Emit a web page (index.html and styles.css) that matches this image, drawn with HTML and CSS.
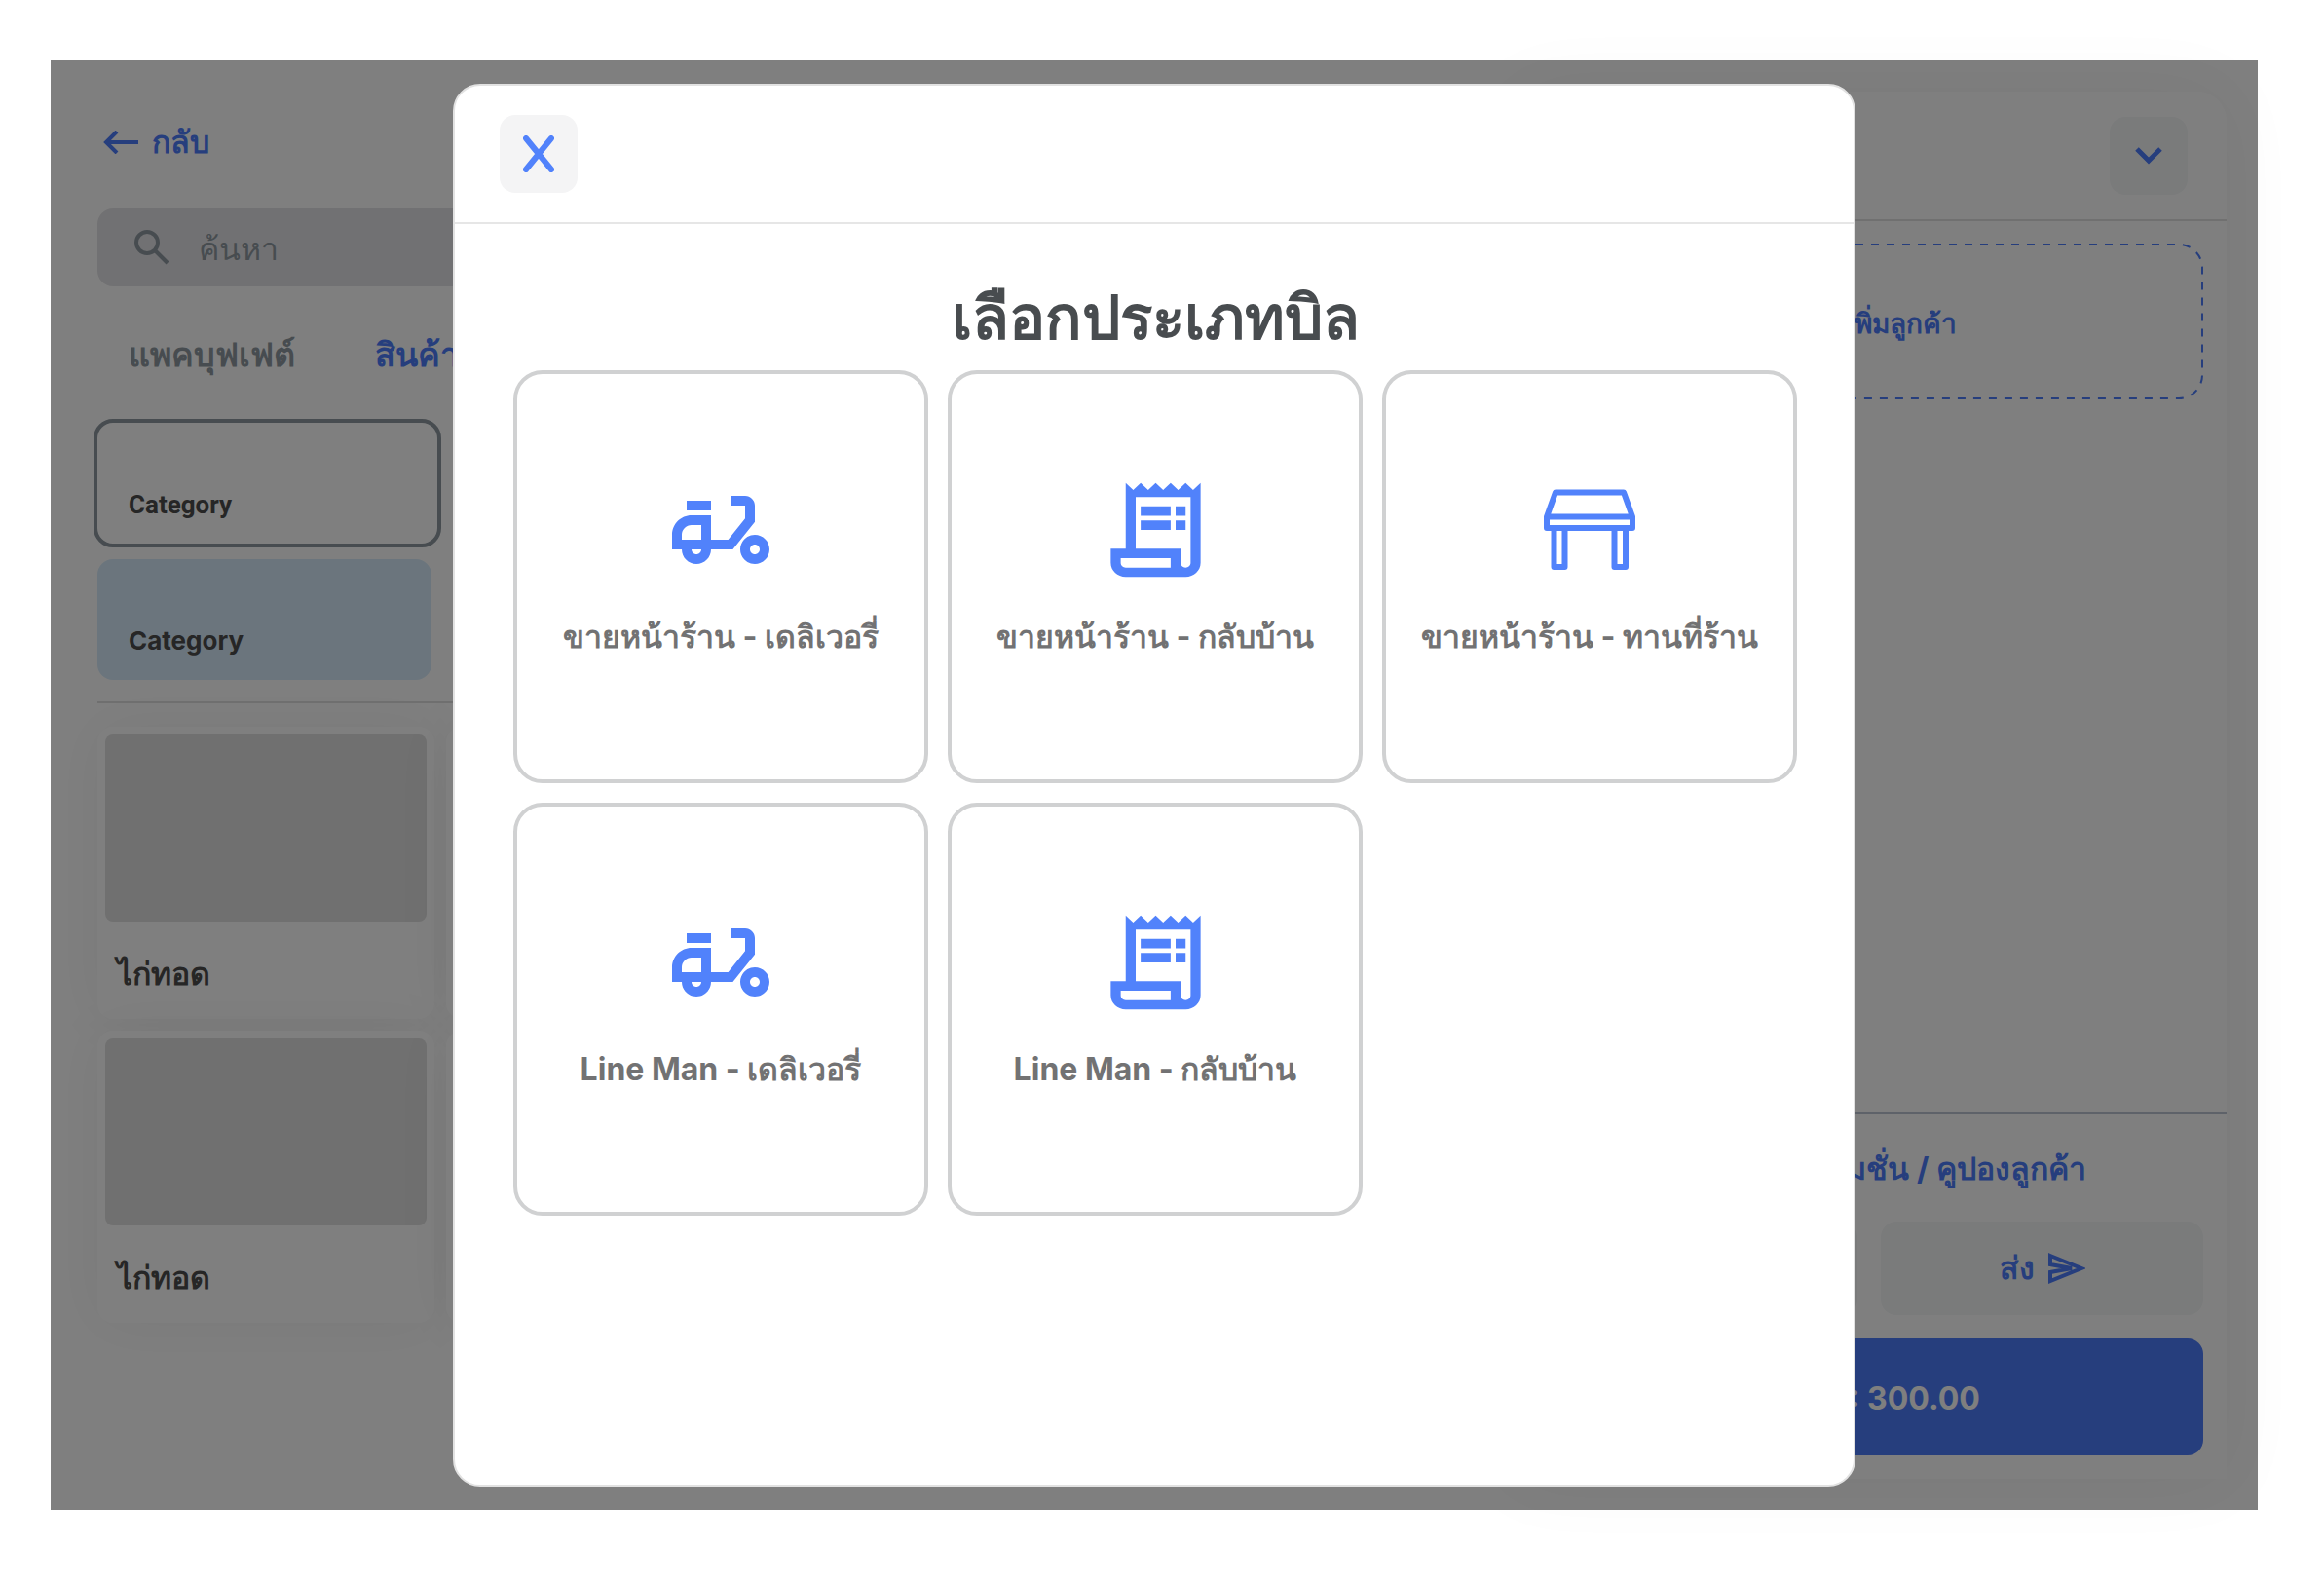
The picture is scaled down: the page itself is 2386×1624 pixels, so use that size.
FILE: index.html
```html
<!DOCTYPE html>
<html lang="th">
<head>
    <meta charset="UTF-8">
    <meta name="viewport" content="width=device-width, initial-scale=1.0">
    <title>เลือกประเภทบิล</title>
    <link rel="stylesheet" href="styles.css">
</head>
<body>
    <!-- shared icons -->
    <svg class="sprite" aria-hidden="true">
        <symbol id="scooter" viewBox="0 0 24 24">
            <path d="M19 7c0-1.1-.9-2-2-2h-3v2h3v2.65L13.52 14H10V9H6c-2.21 0-4 1.79-4 4v3h2c0 1.66 1.34 3 3 3s3-1.34 3-3h4.48L19 10.35V7zM8 14H4v-1c0-1.1.9-2 2-2h2v3zm-1 3c-.55 0-1-.45-1-1h2c0 .55-.45 1-1 1z"/>
            <path d="M5 6h5v2H5zM19 13c-1.66 0-3 1.34-3 3s1.34 3 3 3 3-1.34 3-3-1.34-3-3-3zm0 4c-.55 0-1-.45-1-1s.45-1 1-1 1 .45 1 1-.45 1-1 1z"/>
        </symbol>
        <symbol id="receipt" viewBox="0 0 24 24" preserveAspectRatio="none">
            <path d="M19.5 3.5L18 2l-1.5 1.5L15 2l-1.5 1.5L12 2l-1.5 1.5L9 2 7.5 3.5 6 2v14H3v3c0 1.66 1.34 3 3 3h12c1.66 0 3-1.34 3-3V2l-1.5 1.5zM15 20H6c-.55 0-1-.45-1-1v-1h10v2zm4-1c0 .55-.45 1-1 1s-1-.45-1-1v-3H8V5h11v14z"/>
            <path d="M9 7h6v2H9zM16 7h2v2h-2zM9 10h6v2H9zM16 10h2v2h-2z"/>
        </symbol>
        <symbol id="table" viewBox="0 0 94 84">
            <path d="M12 3.5H82L91 28.5V40H3V28.5ZM3 28.5H91M10.500 40V80H21.500V40M72.500 40V80H84V40" fill="none" stroke="currentColor" stroke-width="6" stroke-linejoin="round"/>
        </symbol>
    </svg>

    <div class="screen">
        <main class="app">
            <section class="catalog">
                <a class="back" href="#">
                    <svg width="36" height="24" viewBox="0 0 36 24" fill="none" stroke="currentColor" stroke-width="4"><path d="M36 12H3M14 1L3 12l11 11"/></svg>
                    กลับ
                </a>
                <label class="search">
                    <svg width="36" height="36" viewBox="0 0 36 36" fill="none" stroke="currentColor" stroke-width="4"><circle cx="13" cy="13" r="11"/><path d="M21 21l13 13"/></svg>
                    <input type="text" placeholder="ค้นหา" aria-label="ค้นหา">
                </label>
                <nav class="tabs">
                    <a href="#">แพคบุฟเฟต์</a>
                    <a class="active" href="#">สินค้า</a>
                </nav>
                <div class="categories">
                    <button class="category selected">Category</button>
                    <button class="category blue">Category</button>
                </div>
                <div class="products">
                    <article class="product"><div class="photo"></div><h3>ไก่ทอด</h3></article>
                    <article class="product"><div class="photo"></div><h3>ไก่ทอด</h3></article>
                    <article class="product"><div class="photo"></div><h3>ไก่ทอด</h3></article>
                    <article class="product"><div class="photo"></div><h3>ไก่ทอด</h3></article>
                    <article class="product"><div class="photo"></div><h3>ไก่ทอด</h3></article>
                    <article class="product"><div class="photo"></div><h3>ไก่ทอด</h3></article>
                </div>
            </section>

            <aside class="order">
                <header class="order-header">
                    <button class="square-btn" aria-label="ย่อ">
                        <svg width="28" height="20" viewBox="0 0 28 20" fill="none" stroke="currentColor" stroke-width="5"><path d="M2 3l12 12L26 3"/></svg>
                    </button>
                </header>
                <div class="order-body">
                    <button class="add-customer">
                        <svg class="dashes" aria-hidden="true"><rect width="100%" height="100%" rx="24"/></svg>
                        <span>เพิ่มลูกค้า</span>
                    </button>
                </div>
                <footer class="order-footer">
                    <a class="coupon" href="#">โปรโมชั่น / คูปองลูกค้า</a>
                    <div class="actions">
                        <button class="soft-btn">บันทึก</button>
                        <button class="soft-btn">
                            ส่ง
                            <svg width="38" height="32" viewBox="0 0 38 32" fill="none" stroke="currentColor" stroke-width="4"><path d="M2 3l32 13L2 29v-9l22-4L2 12z"/></svg>
                        </button>
                    </div>
                    <button class="pay-btn">ชำระ : 300.00</button>
                </footer>
            </aside>
        </main>

        <div class="overlay">
            <div class="modal" role="dialog" aria-modal="true" aria-labelledby="modalTitle">
                <header class="modal-header">
                    <button class="square-btn" aria-label="ปิด">
                        <svg width="32" height="38" viewBox="0 0 32 38" fill="none" stroke="currentColor" stroke-width="6" stroke-linecap="round"><path d="M3 3l26 32M29 3L3 35"/></svg>
                    </button>
                </header>
                <div class="modal-body">
                    <h1 id="modalTitle">เลือกประเภทบิล</h1>
                    <div class="bill-types">
                        <button class="bill-type">
                            <svg class="icon"><use href="#scooter"/></svg>
                            <span>ขายหน้าร้าน - เดลิเวอรี่</span>
                        </button>
                        <button class="bill-type">
                            <svg class="icon receipt"><use href="#receipt"/></svg>
                            <span>ขายหน้าร้าน - กลับบ้าน</span>
                        </button>
                        <button class="bill-type">
                            <svg class="icon table"><use href="#table"/></svg>
                            <span>ขายหน้าร้าน - ทานที่ร้าน</span>
                        </button>
                        <button class="bill-type">
                            <svg class="icon"><use href="#scooter"/></svg>
                            <span>Line Man - เดลิเวอรี่</span>
                        </button>
                        <button class="bill-type">
                            <svg class="icon receipt"><use href="#receipt"/></svg>
                            <span>Line Man - กลับบ้าน</span>
                        </button>
                    </div>
                </div>
            </div>
        </div>
    </div>
</body>
</html>
```
FILE: styles.css
```css
* {
    margin: 0;
    padding: 0;
    box-sizing: border-box;
}

:root {
    --blue: #4c7cfa;
    --gray: #8e98a0;
    --dark: #4c4c4c;
    --line: #e0e0e0;
    --soft: #f4f6f7;
}

body {
    font-family: Inter, "Noto Sans", sans-serif;
    font-size: 32px;
    line-height: 40px;
    background: #fff;
    min-height: 100vh;
    padding: 62px 68px 74px 52px;
    display: flex;
}

button,
input {
    font: inherit;
    color: inherit;
    border: none;
    background: none;
}

button {
    cursor: pointer;
}

a {
    color: inherit;
    text-decoration: none;
}

svg {
    flex: none;
}

.sprite {
    display: none;
}

.screen {
    position: relative;
    flex: 1;
    display: flex;
}

.app {
    flex: 1;
    display: flex;
    gap: 32px;
    padding: 32px 32px 32px 48px;
}

/* catalog */
.catalog {
    flex: 1;
    min-width: 0;
}

.back {
    display: flex;
    align-items: center;
    gap: 14px;
    width: max-content;
    margin: 32px 6px 48px;
    color: var(--blue);
    font-weight: 700;
}

.search {
    display: flex;
    align-items: center;
    gap: 30px;
    height: 80px;
    padding: 0 38px;
    border-radius: 16px;
    background: #e3e3e6;
    color: var(--gray);
}

.search input {
    flex: 1;
    padding-top: 4px;
    outline: none;
    font-weight: 500;
}

.search input::placeholder {
    color: var(--gray);
    opacity: 1;
}

.tabs {
    display: flex;
    gap: 82px;
    padding: 50px 32px;
    color: var(--gray);
    font-size: 34px;
    font-weight: 700;
}

.tabs .active {
    color: var(--blue);
}

.categories {
    display: flex;
    flex-direction: column;
    gap: 16px;
    padding-bottom: 22px;
    border-bottom: 2px solid var(--line);
}

.category {
    display: flex;
    align-items: flex-end;
    width: 343px;
    height: 124px;
    padding: 20px 32px;
    border-radius: 16px;
    color: var(--dark);
    font-size: 26px;
    font-weight: 700;
}

.category.selected {
    width: 349px;
    outline: 4px solid var(--gray);
    font-family: Roboto, sans-serif;
}

.category.blue {
    background: #d7ebfa;
}

.products {
    display: grid;
    grid-template-columns: repeat(3, 346px);
    gap: 12px;
    padding-top: 24px;
}

.product {
    height: 300px;
    padding: 8px;
    border-radius: 16px;
    background: #fff;
    box-shadow: 0 0 60px rgba(0, 0, 0, 0.05);
}

.photo {
    height: 192px;
    border-radius: 8px;
    background: var(--line);
}

.product h3 {
    padding: 34px 12px;
    color: var(--dark);
    font-size: 32px;
    font-weight: 700;
}

/* order panel */
.order {
    width: 734px;
    display: flex;
    flex-direction: column;
    border-radius: 30px 30px 0 0;
    background: #fff;
    box-shadow: 0 0 80px rgba(0, 0, 0, 0.05);
    color: var(--blue);
    font-weight: 700;
}

.order-header {
    display: flex;
    justify-content: flex-end;
    padding: 26px 40px 25px;
    border-bottom: 2px solid var(--line);
}

.square-btn {
    display: flex;
    align-items: center;
    justify-content: center;
    width: 80px;
    height: 80px;
    border-radius: 16px;
    background: var(--soft);
}

.order-body {
    flex: 1;
    padding: 23px 24px;
}

.add-customer {
    position: relative;
    width: 100%;
    height: 160px;
    padding: 4px 0 0 64px;
    font-size: 28px;
}

.dashes {
    position: absolute;
    inset: 1px;
    width: calc(100% - 2px);
    height: calc(100% - 2px);
    overflow: visible;
    fill: none;
    stroke: currentColor;
    stroke-width: 2;
    stroke-dasharray: 8 8;
}

.order-footer {
    display: flex;
    flex-direction: column;
    gap: 24px;
    padding: 36px 24px 24px;
    border-top: 2px solid #bcc4d2;
}

.coupon {
    padding: 0 120px 10px;
    text-align: right;
}

.actions {
    display: flex;
    gap: 24px;
}

.soft-btn {
    flex: 1;
    display: flex;
    align-items: center;
    justify-content: center;
    gap: 14px;
    height: 96px;
    border-radius: 16px;
    background: var(--soft);
}

.pay-btn {
    height: 120px;
    padding: 4px 0 0 12px;
    border-radius: 16px;
    background: var(--blue);
    color: #fff;
}

/* modal */
.overlay {
    position: absolute;
    inset: 0;
    display: flex;
    justify-content: center;
    padding: 24px;
    background: rgba(0, 0, 0, 0.5);
}

.modal {
    height: 100%;
    aspect-ratio: 1;
    border: 2px solid #e2e2e2;
    border-radius: 28px;
    background: #fff;
    color: #5182fb;
}

.modal-header {
    padding: 30px 46px;
    border-bottom: 2px solid #e6e6e6;
}

.modal .square-btn {
    background: #f4f4f5;
}

.modal-body {
    padding: 56px 58px 56px 60px;
}

.modal h1 {
    margin-bottom: 14px;
    color: #484c4f;
    font-size: 62px;
    font-weight: 700;
    line-height: 80px;
    text-align: center;
}

.bill-types {
    display: grid;
    grid-template-columns: repeat(3, 1fr);
    gap: 20px;
}

.bill-type {
    display: flex;
    flex-direction: column;
    align-items: center;
    height: 424px;
    padding-top: 100px;
    border: 4px solid #d0d1d2;
    border-radius: 30px;
}

.bill-type span {
    margin-top: 30px;
    color: #727273;
    font-weight: 700;
    white-space: nowrap;
}

.icon {
    width: 120px;
    height: 120px;
    fill: currentColor;
}

.icon.receipt {
    width: 123px;
    padding: 2px 0;
}

.icon.table {
    padding: 18px 13px;
}
```
